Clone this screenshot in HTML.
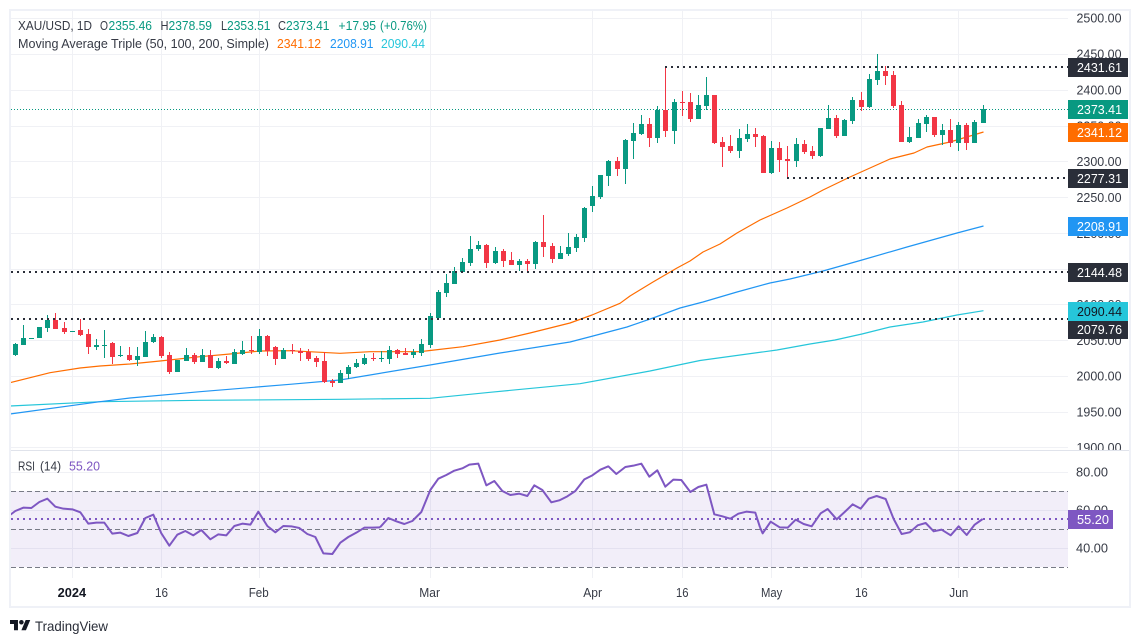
<!DOCTYPE html>
<html lang="en">
<head>
<meta charset="utf-8">
<title>XAU/USD Chart</title>
<style>
html,body{margin:0;padding:0;background:#fff;width:1140px;height:644px;overflow:hidden}
svg{display:block}
text{font-family:"Liberation Sans",Arial,sans-serif;font-size:12.5px;fill:#363a45}
</style>
</head>
<body>
<svg width="1140" height="644" viewBox="0 0 1140 644" xmlns="http://www.w3.org/2000/svg">
<rect width="1140" height="644" fill="#fff"/>

<!-- horizontal grid -->
<g fill="#f0f1f5" shape-rendering="crispEdges">
<rect x="11" y="18" width="1057" height="1"/><rect x="11" y="54" width="1057" height="1"/>
<rect x="11" y="90" width="1057" height="1"/><rect x="11" y="126" width="1057" height="1"/>
<rect x="11" y="161" width="1057" height="1"/><rect x="11" y="197" width="1057" height="1"/>
<rect x="11" y="233" width="1057" height="1"/><rect x="11" y="269" width="1057" height="1"/>
<rect x="11" y="304" width="1057" height="1"/><rect x="11" y="340" width="1057" height="1"/>
<rect x="11" y="376" width="1057" height="1"/><rect x="11" y="412" width="1057" height="1"/>
<rect x="11" y="447" width="1057" height="1"/>
<rect x="11" y="472" width="1057" height="1"/><rect x="11" y="510" width="1057" height="1"/><rect x="11" y="548" width="1057" height="1"/>
<!-- vertical grid -->
<rect x="72" y="11" width="1" height="567"/><rect x="161" y="11" width="1" height="567"/>
<rect x="259" y="11" width="1" height="567"/><rect x="430" y="11" width="1" height="567"/>
<rect x="592" y="11" width="1" height="567"/><rect x="682" y="11" width="1" height="567"/>
<rect x="771" y="11" width="1" height="567"/><rect x="861" y="11" width="1" height="567"/>
<rect x="958" y="11" width="1" height="567"/>
</g>

<!-- moving averages -->
<g fill="none" stroke-width="1.2" stroke-linejoin="round">
<polyline stroke="#26c6da" points="10,406 100,401.7 200,400.3 290,399.7 340,399.3 430,398.3 490,392.3 580,383.7 650,371 700,360.5 777,350 810,344 835,340 862,334 890,327 923,322 957,315 983.5,310.7"/>
<polyline stroke="#2196f3" points="10,414 100,401.7 130,398 200,391.7 290,384.3 340,380 430,365 500,353 570,342 593,336 627,327 653,318 680,308 703,302 737,292 770,283 790,279 823,271 862,260 907,247 957,233 983.5,226"/>
<polyline stroke="#ff6d00" points="10,382.7 50,372.7 80,368 100,366 130,364 160,361 200,356.7 230,354 260,351 290,350.7 340,353.3 370,351.7 420,351.7 430,350.5 463,346.7 500,340 530,333 550,328 570,323 592,315 620,303.3 630,296 653,282 677,268 690,261 703,252 720,244 737,233 760,220 787,208 810,197 823,190 850,177 890,159 914,153 927,147 950,142 983.5,132"/>
</g>

<!-- price line -->
<line x1="11" y1="109.5" x2="1068" y2="109.5" stroke="#089981" stroke-width="1" stroke-dasharray="1 2" shape-rendering="crispEdges"/>

<!-- green candles -->
<path fill="#089981" shape-rendering="crispEdges" d="M15 343h1V356h-1zM13 344h5V355h-5zM23 325h1V345h-1zM21 338h5V345h-5zM29 338h5V339h-5zM37 327h5V338h-5zM47 315h1V332h-1zM45 320h5V328h-5zM70 331h5V332h-5zM96 339h1V350h-1zM94 345h5V347h-5zM104 330h1V358h-1zM102 345h5V346h-5zM120 346h1V357h-1zM118 355h5V356h-5zM137 347h1V366h-1zM135 356h5V360h-5zM145 331h1V357h-1zM143 342h5V357h-5zM153 334h1V343h-1zM151 337h5V342h-5zM175 360h5V372h-5zM186 348h1V361h-1zM184 355h5V361h-5zM202 349h1V362h-1zM200 355h5V362h-5zM218 358h1V369h-1zM216 361h5V368h-5zM234 349h1V364h-1zM232 352h5V364h-5zM242 341h1V355h-1zM240 350h5V354h-5zM259 329h1V354h-1zM257 336h5V352h-5zM283 348h1V359h-1zM281 350h5V359h-5zM340 370h1V383h-1zM338 373h5V383h-5zM348 365h1V379h-1zM346 367h5V374h-5zM356 359h1V368h-1zM354 363h5V367h-5zM364 354h1V365h-1zM362 358h5V364h-5zM381 351h1V362h-1zM379 358h5V359h-5zM389 346h1V364h-1zM387 350h5V359h-5zM413 349h1V358h-1zM411 352h5V355h-5zM421 339h1V356h-1zM419 344h5V353h-5zM430 313h1V348h-1zM428 316h5V345h-5zM438 290h1V319h-1zM436 292h5V318h-5zM446 274h1V297h-1zM444 283h5V293h-5zM454 267h1V284h-1zM452 271h5V284h-5zM462 258h1V273h-1zM460 262h5V272h-5zM470 236h1V266h-1zM468 249h5V263h-5zM478 241h1V251h-1zM476 245h5V249h-5zM495 247h1V264h-1zM493 251h5V263h-5zM519 259h1V271h-1zM517 261h5V265h-5zM535 241h1V269h-1zM533 242h5V264h-5zM560 246h1V259h-1zM558 253h5V259h-5zM568 233h1V256h-1zM566 247h5V254h-5zM576 234h1V252h-1zM574 237h5V248h-5zM584 207h1V242h-1zM582 208h5V238h-5zM592 186h1V212h-1zM590 196h5V206h-5zM600 175h1V199h-1zM598 175h5V197h-5zM608 160h1V186h-1zM606 161h5V176h-5zM625 139h1V184h-1zM623 140h5V169h-5zM633 123h1V159h-1zM631 133h5V141h-5zM641 115h1V135h-1zM639 124h5V134h-5zM657 106h1V143h-1zM655 110h5V138h-5zM674 99h1V144h-1zM672 102h5V131h-5zM698 95h1V119h-1zM696 105h5V119h-5zM706 77h1V110h-1zM704 95h5V106h-5zM739 129h1V158h-1zM737 138h5V151h-5zM747 124h1V142h-1zM745 134h5V139h-5zM771 141h1V174h-1zM769 148h5V173h-5zM796 138h1V167h-1zM794 144h5V161h-5zM820 128h1V157h-1zM818 128h5V156h-5zM828 105h1V129h-1zM826 118h5V129h-5zM844 119h1V136h-1zM842 120h5V136h-5zM852 97h1V124h-1zM850 100h5V121h-5zM869 74h1V108h-1zM867 79h5V107h-5zM877 54h1V85h-1zM875 71h5V80h-5zM909 127h1V143h-1zM907 137h5V142h-5zM918 119h1V138h-1zM916 123h5V138h-5zM926 115h1V132h-1zM924 117h5V124h-5zM942 124h1V145h-1zM940 130h5V135h-5zM958 122h1V151h-1zM956 125h5V143h-5zM974 120h1V143h-1zM972 122h5V143h-5zM983 105h1V123h-1zM981 109h5V123h-5z"/>
<!-- red candles -->
<path fill="#f23645" shape-rendering="crispEdges" d="M55 313h1V329h-1zM53 320h5V329h-5zM64 322h1V334h-1zM62 328h5V332h-5zM80 319h1V336h-1zM78 330h5V335h-5zM88 329h1V354h-1zM86 334h5V347h-5zM112 342h1V364h-1zM110 343h5V357h-5zM129 347h1V361h-1zM127 355h5V360h-5zM161 336h1V358h-1zM159 337h5V356h-5zM169 352h1V374h-1zM167 355h5V372h-5zM194 353h1V364h-1zM192 355h5V362h-5zM210 350h1V368h-1zM208 355h5V368h-5zM226 356h1V364h-1zM224 361h5V363h-5zM251 336h1V354h-1zM249 350h5V351h-5zM267 335h1V356h-1zM265 336h5V351h-5zM275 346h1V365h-1zM273 347h5V359h-5zM292 344h1V354h-1zM290 350h5V351h-5zM300 348h1V361h-1zM298 351h5V353h-5zM308 349h1V361h-1zM306 352h5V359h-5zM316 356h1V367h-1zM314 358h5V362h-5zM324 352h1V383h-1zM322 361h5V382h-5zM332 379h1V387h-1zM330 381h5V383h-5zM373 353h1V361h-1zM371 358h5V359h-5zM397 349h1V358h-1zM395 350h5V354h-5zM405 348h1V355h-1zM403 353h5V355h-5zM486 244h1V268h-1zM484 245h5V263h-5zM503 249h1V267h-1zM501 251h5V261h-5zM511 252h1V265h-1zM509 260h5V265h-5zM527 259h1V272h-1zM525 261h5V264h-5zM543 215h1V257h-1zM541 242h5V247h-5zM552 243h1V263h-1zM550 246h5V259h-5zM617 157h1V176h-1zM615 161h5V169h-5zM649 118h1V147h-1zM647 124h5V138h-5zM665 67h1V137h-1zM663 110h5V131h-5zM682 91h1V116h-1zM680 102h5V103h-5zM690 93h1V122h-1zM688 102h5V119h-5zM714 95h1V144h-1zM712 95h5V143h-5zM722 137h1V167h-1zM720 142h5V147h-5zM730 135h1V153h-1zM728 146h5V151h-5zM755 128h1V147h-1zM753 134h5V137h-5zM763 135h1V173h-1zM761 136h5V173h-5zM779 142h1V172h-1zM777 148h5V160h-5zM787 146h1V178h-1zM785 159h5V161h-5zM804 140h1V154h-1zM802 144h5V152h-5zM812 146h1V159h-1zM810 151h5V156h-5zM836 115h1V138h-1zM834 118h5V136h-5zM861 92h1V111h-1zM859 100h5V107h-5zM885 66h1V85h-1zM883 71h5V76h-5zM893 71h1V108h-1zM891 75h5V106h-5zM901 101h1V142h-1zM899 105h5V142h-5zM934 117h1V137h-1zM932 117h5V135h-5zM950 119h1V147h-1zM948 130h5V143h-5zM966 123h1V150h-1zM964 125h5V143h-5z"/>

<!-- horizontal rays -->
<g stroke="#2a2e39" stroke-width="2" stroke-dasharray="2 4" shape-rendering="crispEdges">
<line x1="665" y1="67" x2="1068" y2="67"/>
<line x1="787" y1="178" x2="1068" y2="178"/>
<line x1="11" y1="272" x2="1068" y2="272"/>
<line x1="11" y1="319" x2="1068" y2="319"/>
</g>

<!-- price axis -->
<g>
<text x="1076.5" y="22.5" textLength="45" lengthAdjust="spacingAndGlyphs">2500.00</text>
<text x="1076.5" y="58.5" textLength="45" lengthAdjust="spacingAndGlyphs">2450.00</text>
<text x="1076.5" y="94.5" textLength="45" lengthAdjust="spacingAndGlyphs">2400.00</text>
<text x="1076.5" y="130.5" textLength="45" lengthAdjust="spacingAndGlyphs">2350.00</text>
<text x="1076.5" y="166" textLength="45" lengthAdjust="spacingAndGlyphs">2300.00</text>
<text x="1076.5" y="202" textLength="45" lengthAdjust="spacingAndGlyphs">2250.00</text>
<text x="1076.5" y="238" textLength="45" lengthAdjust="spacingAndGlyphs">2200.00</text>
<text x="1076.5" y="309" textLength="45" lengthAdjust="spacingAndGlyphs">2100.00</text>
<text x="1076.5" y="345" textLength="45" lengthAdjust="spacingAndGlyphs">2050.00</text>
<text x="1076.5" y="380.5" textLength="45" lengthAdjust="spacingAndGlyphs">2000.00</text>
<text x="1076.5" y="416.5" textLength="45" lengthAdjust="spacingAndGlyphs">1950.00</text>
<text x="1076.5" y="452" textLength="45" lengthAdjust="spacingAndGlyphs">1900.00</text>
</g>

<!-- price labels -->
<g shape-rendering="crispEdges">
<rect x="1068" y="58" width="60" height="19" fill="#2a2e39"/>
<rect x="1068" y="100" width="60" height="19" fill="#089981"/>
<rect x="1068" y="123" width="60" height="19" fill="#ff6d00"/>
<rect x="1068" y="169" width="60" height="19" fill="#2a2e39"/>
<rect x="1068" y="217" width="60" height="19" fill="#2196f3"/>
<rect x="1068" y="263" width="60" height="19" fill="#2a2e39"/>
<rect x="1068" y="302" width="60" height="19" fill="#26c6da"/>
<rect x="1068" y="321" width="60" height="18" fill="#2a2e39"/>
</g>
<g>
<text x="1077" y="72" textLength="45" lengthAdjust="spacingAndGlyphs" style="fill:#fff">2431.61</text>
<text x="1077" y="114" textLength="45" lengthAdjust="spacingAndGlyphs" style="fill:#fff">2373.41</text>
<text x="1077" y="137" textLength="45" lengthAdjust="spacingAndGlyphs" style="fill:#fff">2341.12</text>
<text x="1077" y="183" textLength="45" lengthAdjust="spacingAndGlyphs" style="fill:#fff">2277.31</text>
<text x="1077" y="231" textLength="45" lengthAdjust="spacingAndGlyphs" style="fill:#fff">2208.91</text>
<text x="1077" y="277" textLength="45" lengthAdjust="spacingAndGlyphs" style="fill:#fff">2144.48</text>
<text x="1077" y="316" textLength="45" lengthAdjust="spacingAndGlyphs" style="fill:#131722">2090.44</text>
<text x="1077" y="334" textLength="45" lengthAdjust="spacingAndGlyphs" style="fill:#fff">2079.76</text>
</g>

<!-- legend -->
<text x="18" y="30" textLength="74" lengthAdjust="spacingAndGlyphs">XAU/USD, 1D</text>
<text x="100" y="30" textLength="8" lengthAdjust="spacingAndGlyphs">O</text>
<text x="108.5" y="30" textLength="43.5" lengthAdjust="spacingAndGlyphs" style="fill:#089981">2355.46</text>
<text x="160.5" y="30" textLength="8" lengthAdjust="spacingAndGlyphs">H</text>
<text x="168.5" y="30" textLength="43.5" lengthAdjust="spacingAndGlyphs" style="fill:#089981">2378.59</text>
<text x="221" y="30" textLength="6" lengthAdjust="spacingAndGlyphs">L</text>
<text x="227" y="30" textLength="43.5" lengthAdjust="spacingAndGlyphs" style="fill:#089981">2353.51</text>
<text x="278" y="30" textLength="8" lengthAdjust="spacingAndGlyphs">C</text>
<text x="286" y="30" textLength="43.5" lengthAdjust="spacingAndGlyphs" style="fill:#089981">2373.41</text>
<text x="338.5" y="30" textLength="37.5" lengthAdjust="spacingAndGlyphs" style="fill:#089981">+17.95</text>
<text x="380" y="30" textLength="47" lengthAdjust="spacingAndGlyphs" style="fill:#089981">(+0.76%)</text>
<text x="18" y="48" textLength="251" lengthAdjust="spacingAndGlyphs">Moving Average Triple (50, 100, 200, Simple)</text>
<text x="277" y="48" textLength="44" lengthAdjust="spacingAndGlyphs" style="fill:#ff6d00">2341.12</text>
<text x="330" y="48" textLength="43.5" lengthAdjust="spacingAndGlyphs" style="fill:#2196f3">2208.91</text>
<text x="381" y="48" textLength="44" lengthAdjust="spacingAndGlyphs" style="fill:#26c6da">2090.44</text>

<!-- pane separator -->
<rect x="1068" y="451" width="61" height="6" fill="#fff"/>
<rect x="10" y="450" width="1120" height="1" fill="#e0e3eb" shape-rendering="crispEdges"/>

<!-- RSI band -->
<rect x="11" y="491" width="1057" height="76" fill="#7e57c2" fill-opacity=".1" shape-rendering="crispEdges"/>
<g stroke="#787b86" stroke-width="1" stroke-dasharray="5 3" shape-rendering="crispEdges">
<line x1="11" y1="491.5" x2="1068" y2="491.5"/>
<line x1="11" y1="529.5" x2="1068" y2="529.5"/>
<line x1="11" y1="567.5" x2="1068" y2="567.5"/>
</g>
<line x1="11" y1="519" x2="1068" y2="519" stroke="#7e57c2" stroke-width="2" stroke-dasharray="2 4" shape-rendering="crispEdges"/>

<!-- RSI line -->
<g fill="none" stroke="#7e57c2" stroke-width="6" stroke-linejoin="round">
<polyline transform="translate(0,450) scale(.33333)" points="30,195 46,183 70,173 94,174 118,156 142,146 166,170 190,176 217,178 241,187 265,221 289,218 313,218 337,251 361,248 385,258 412,249 436,204 460,194 484,250 508,287 532,254 556,243 580,256 604,240 631,268 655,253 679,256 703,228 727,221 751,224 775,185 802,228 826,247 850,228 874,229 898,234 922,252 946,261 970,310 997,312 1021,278 1045,261 1069,248 1093,233 1117,233 1140,232"/>
<polyline transform="translate(380,450) scale(.33333)" points="0,232 25,204 49,214 73,222 97,213 124,186 151,120 175,86 199,75 223,62 247,55 268,44 295,41 319,106 343,93 367,123 391,135 418,131 442,138 463,106 487,120 514,157 538,151 562,139 586,123 613,88 637,76 661,59 685,49 709,72 736,51 760,47 784,41 808,80 832,61 856,110 880,89 904,90 931,126 955,111 979,104 1003,193 1027,199 1051,206 1075,191 1099,185 1126,188 1140,232"/>
<polyline transform="translate(760,450) scale(.33333)" points="0,232 8,250 32,215 59,232 83,233 107,209 131,222 155,229 182,190 203,177 230,208 254,186 278,163 302,176 326,146 350,138 377,147 401,207 425,252 449,247 473,226 497,219 521,244 545,239 572,256 596,229 620,255 644,224 668,207"/>
</g>

<!-- RSI legend -->
<text x="18" y="470.5" textLength="17" lengthAdjust="spacingAndGlyphs">RSI</text>
<text x="40" y="470.5" textLength="21" lengthAdjust="spacingAndGlyphs">(14)</text>
<text x="69" y="470.5" textLength="31" lengthAdjust="spacingAndGlyphs" style="fill:#7e57c2">55.20</text>

<!-- RSI axis -->
<text x="1076" y="476.5" textLength="32" lengthAdjust="spacingAndGlyphs">80.00</text>
<text x="1076" y="514.5" textLength="32" lengthAdjust="spacingAndGlyphs">60.00</text>
<text x="1076" y="552.5" textLength="32" lengthAdjust="spacingAndGlyphs">40.00</text>
<rect x="1068" y="510" width="45" height="19" fill="#7e57c2" shape-rendering="crispEdges"/>
<text x="1077" y="524" textLength="32" lengthAdjust="spacingAndGlyphs" style="fill:#fff">55.20</text>

<!-- time axis -->
<text x="57.7" y="597" textLength="28.5" lengthAdjust="spacingAndGlyphs" style="font-weight:bold;fill:#131722">2024</text>
<text x="155" y="597" textLength="13" lengthAdjust="spacingAndGlyphs">16</text>
<text x="248.7" y="597" textLength="20" lengthAdjust="spacingAndGlyphs">Feb</text>
<text x="419.3" y="597" textLength="20.7" lengthAdjust="spacingAndGlyphs">Mar</text>
<text x="583.3" y="597" textLength="18.7" lengthAdjust="spacingAndGlyphs">Apr</text>
<text x="676" y="597" textLength="12.5" lengthAdjust="spacingAndGlyphs">16</text>
<text x="761" y="597" textLength="21.3" lengthAdjust="spacingAndGlyphs">May</text>
<text x="855" y="597" textLength="12.7" lengthAdjust="spacingAndGlyphs">16</text>
<text x="949.3" y="597" textLength="19" lengthAdjust="spacingAndGlyphs">Jun</text>

<!-- frame -->
<rect x="10" y="10" width="1120" height="597" fill="none" stroke="#eff1f7" stroke-width="2" shape-rendering="crispEdges"/>

<!-- logo -->
<g transform="translate(10,617.7) scale(.57)" fill="#131722">
<path d="M14 22H7V11H0V4h14v18zM28 22h-8l7.5-18h8L28 22z"/>
<circle cx="20" cy="8" r="4"/>
</g>
<text x="35" y="631" textLength="73" lengthAdjust="spacingAndGlyphs" style="font-size:14px;fill:#2a2e39">TradingView</text>
</svg>
</body>
</html>
